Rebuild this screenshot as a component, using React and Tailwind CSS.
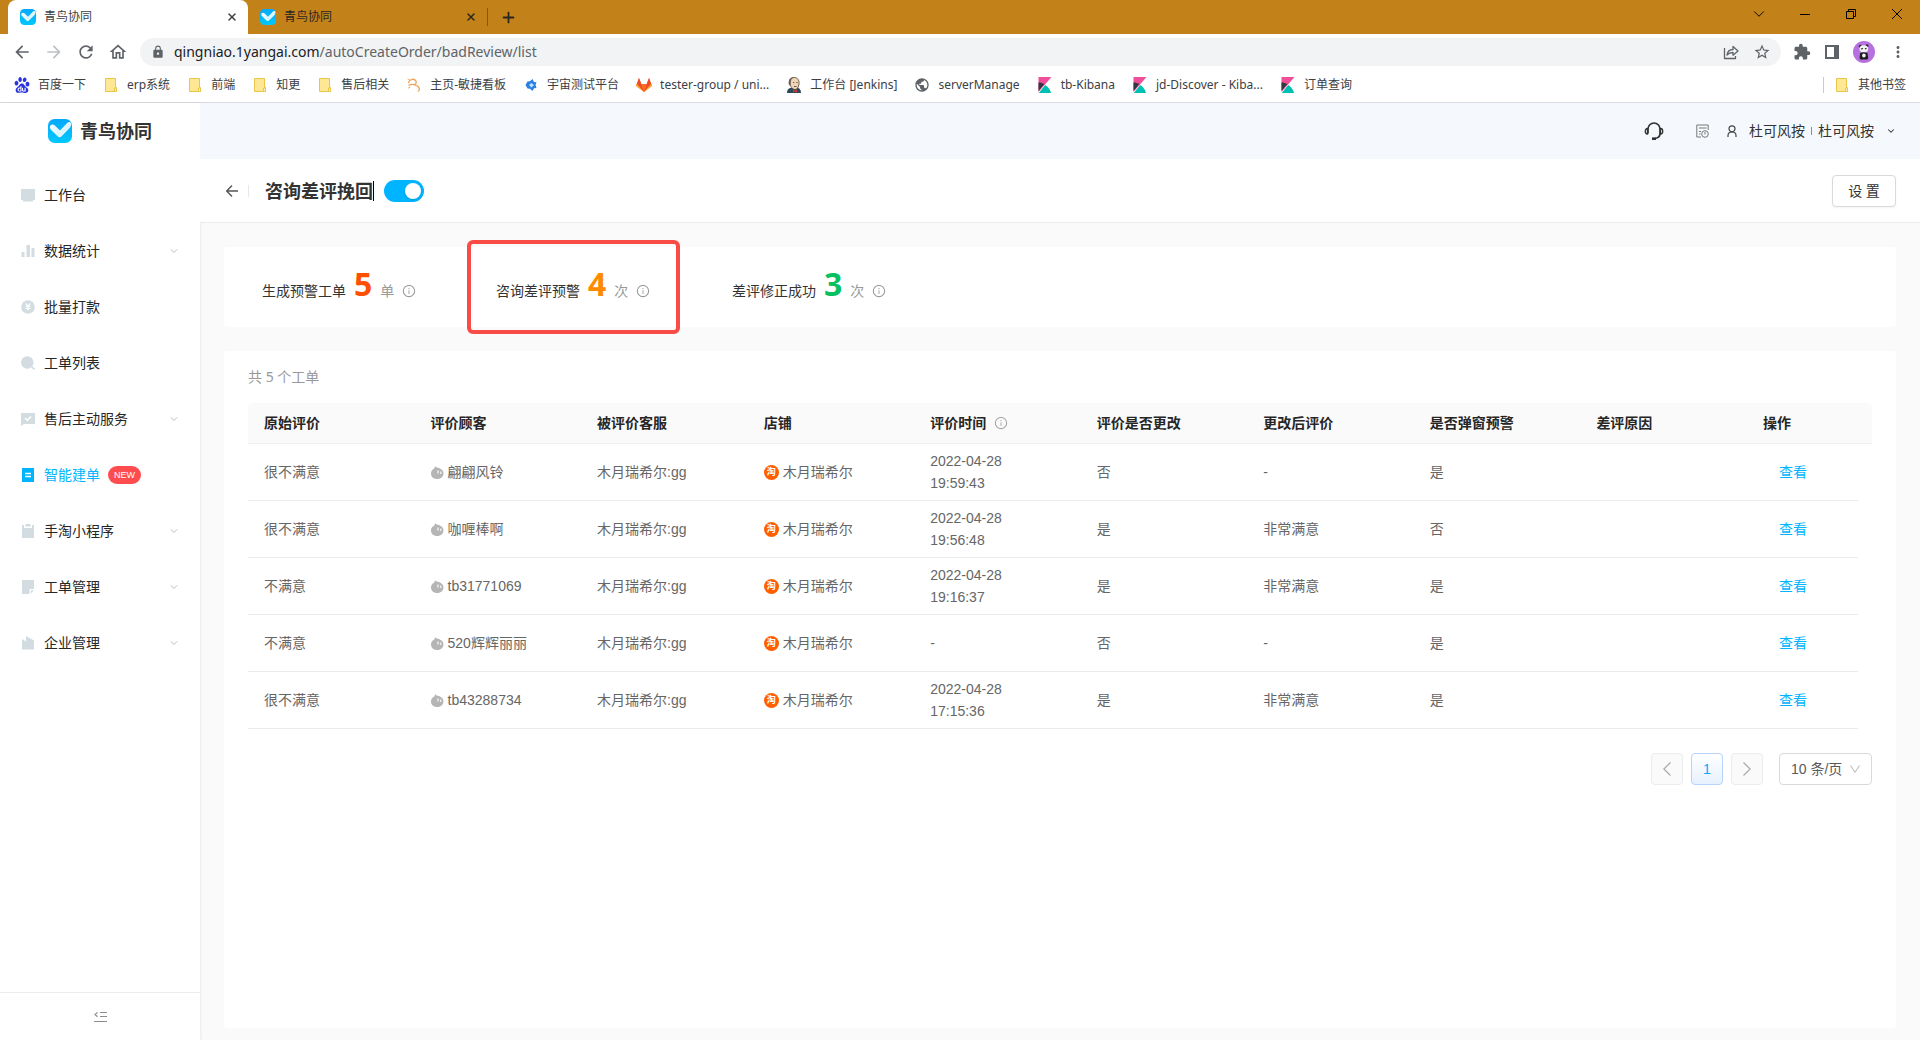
import React from "react";
import {
  MdArrowBack,
  MdArrowForward,
  MdRefresh,
  MdLock,
  MdStarBorder,
  MdExtension,
  MdMoreVert,
  MdPublic,
  MdOutlineHome,
} from "react-icons/md";
import { SiBaidu } from "react-icons/si";
import { AiOutlineInfoCircle } from "react-icons/ai";
import { ChevronDown, X, Plus } from "lucide-react";

function Bird({ className, id }) {
  return (
    <svg viewBox="0 0 24 24" className={className} aria-hidden="true">
      <defs>
        <linearGradient id={id + "a"} x1="0" y1="0" x2="0" y2="1">
          <stop offset="0" stopColor="#06a8fb" />
          <stop offset="1" stopColor="#00c8fd" />
        </linearGradient>
        <linearGradient id={id + "b"} x1="0" y1="0" x2="1" y2="1">
          <stop offset="0" stopColor="#fff" />
          <stop offset="0.6" stopColor="#d9f4ff" />
          <stop offset="1" stopColor="#fff" />
        </linearGradient>
      </defs>
      <rect width="24" height="24" rx="6.5" fill={"url(#" + id + "a)"} />
      <path
        d="M2 7.2 C3 5.2 5 5 6.6 6.3 L12 11.6 L19.6 3.6 C21.4 2.2 23.4 3.2 23.2 5.6 C23 8 21.5 9.2 20 10.8 L13.8 17 C12.4 18.6 11 18.6 9.6 17.2 L3.6 11.4 C2.2 10 1.6 8.6 2 7.2Z"
        fill={"url(#" + id + "b)"}
      />
    </svg>
  );
}

function Folder() {
  return (
    <svg viewBox="0 0 16 16" className="size-4" aria-hidden="true">
      <path d="M2.5 1.5h10v9h1v4h-11z" fill="#ffe794" stroke="#e8c64a" />
      <path d="M11.5 14.5v-3.5h2v3.5z" fill="#fff3c4" stroke="#e8c64a" />
    </svg>
  );
}

function Kibana() {
  return (
    <svg viewBox="0 0 16 16" className="size-4" aria-hidden="true">
      <path d="M1.5 0h13L1.5 15z" fill="#f04e98" />
      <path d="M1.5 5.5c2.2 0 4.2.6 5.8 1.6L1.5 14z" fill="#343741" />
      <path d="M8.2 8c3 1.8 5 4.600 5.800 8H1.800z" fill="#00bfb3" />
    </svg>
  );
}

function Gitlab() {
  return (
    <svg viewBox="0 0 16 16" className="size-4" aria-hidden="true">
      <path d="M0 8.500L3 1l2.300 6h5.400L13 1l3 7.500L8 15z" fill="#fc6d26" />
      <path d="M3 1l2.300 6L8 15 1 7zM13 1l-2.300 6L8 15l7-8z" fill="#ee4a2b" />
      <path d="M.8 6.800L0 9l8 6zM15.200 6.800L16 9l-8 6z" fill="#fca326" />
      <path d="M5.300 7h5.400L8 15z" fill="#fc6d26" />
    </svg>
  );
}

function Jenkins() {
  return (
    <svg viewBox="0 0 16 16" className="size-4" aria-hidden="true">
      <path d="M1 16c0-3 1-4 3-5l7-.5c2.500.5 4 2 4 5.500z" fill="#2f4858" />
      <path d="M3.500 6C3 2.500 5 .5 8.200.5S13.500 3 13 7c-.3 3-1.800 5.500-4 5.500S4 9.500 3.500 6z" fill="#f0d6b7" stroke="#4a3b33" strokeWidth=".8" />
      <path d="M2.800 7.500C2 2.500 4.500 0 8.500.2 6 1 5.300 2.300 5 4L4.500 9z" fill="#6b6058" />
      <path d="M7 5.500h1.300M10.300 5.500h1.300M8 9.500h2.500" stroke="#4a3b33" strokeWidth=".8" />
      <path d="M7 12.500l2 1 2-1v3l-2-1-2 1z" fill="#d33833" />
    </svg>
  );
}

function Agile() {
  return (
    <svg viewBox="0 0 16 16" className="size-4" fill="none" stroke="#f0a35c" strokeLinecap="round" aria-hidden="true">
      <path d="M2.500 5.500C3.500 2 8.500 1 10 4.200c.6 1.600-.2 3-1.800 3.600" strokeWidth="1.300" />
      <path d="M3 8.200c3-1.400 7.500-.8 9.500 1.800 1.200 1.600 1.200 3-.2 4" strokeWidth="1.300" />
      <path d="M2 2l1.500 1M2.500 11l1.500-.8" strokeWidth="1" />
    </svg>
  );
}

function Cosmos() {
  return (
    <svg viewBox="0 0 16 16" className="size-4" aria-hidden="true">
      <path d="M2.500 8l2-3.500 2.500-.2L9.500 2l1.500 3 2.500.2L12.500 8l1 3-2.500.2L9.500 14 7 11.700l-2.500-.2z" fill="#2b7fe0" />
      <path d="M6 8l2.500-2L11 8l-2.500 2.500z" fill="#bfe2fb" />
    </svg>
  );
}

const bookmarks = [
  { icon: <SiBaidu className="size-4 text-[#2932e1]" />, label: "百度一下" },
  { icon: <Folder />, label: "erp系统" },
  { icon: <Folder />, label: "前端" },
  { icon: <Folder />, label: "知更" },
  { icon: <Folder />, label: "售后相关" },
  { icon: <Agile />, label: "主页-敏捷看板" },
  { icon: <Cosmos />, label: "宇宙测试平台" },
  { icon: <Gitlab />, label: "tester-group / uni..." },
  { icon: <Jenkins />, label: "工作台 [Jenkins]" },
  { icon: <MdPublic className="size-4 text-[#5f6368]" />, label: "serverManage" },
  { icon: <Kibana />, label: "tb-Kibana" },
  { icon: <Kibana />, label: "jd-Discover - Kiba..." },
  { icon: <Kibana />, label: "订单查询" },
];

function Browser() {
  return (
    <header className="text-[#3c4043]">
      <div className="flex h-[34px] items-stretch bg-[#c28219] pl-2">
        <div className="flex w-60 items-center rounded-t-lg bg-white pr-2.5 pl-3">
          <Bird className="size-4" id="t1" />
          <span className="ml-2 flex-1 text-xs">青鸟协同</span>
          <button aria-label="关闭标签页" className="text-[#3c4043]">
            <X size={12} strokeWidth={3} />
          </button>
        </div>
        <div className="flex w-[239px] items-center pr-2.5 pl-3">
          <Bird className="size-4" id="t2" />
          <span className="ml-2 flex-1 text-xs text-[#2b2622]">青鸟协同</span>
          <button aria-label="关闭标签页" className="text-[#2b2622]">
            <X size={12} strokeWidth={3} />
          </button>
        </div>
        <span className="my-2 w-px bg-[#7a5a24]" />
        <button aria-label="新建标签页" className="ml-3 text-[#2b2622]">
          <Plus size={17} strokeWidth={2.5} />
        </button>
        <div className="ml-auto flex text-black">
          <button aria-label="搜索标签页" className="flex h-7 w-[46px] items-center justify-center">
            <ChevronDown size={18} strokeWidth={1.25} />
          </button>
          <button aria-label="最小化" className="flex h-7 w-[46px] items-center justify-center">
            <svg width="10" height="10" viewBox="0 0 10 10"><path d="M0 5.5h10" stroke="#000" /></svg>
          </button>
          <button aria-label="还原" className="flex h-7 w-[46px] items-center justify-center">
            <svg width="10" height="10" viewBox="0 0 10 10" fill="none" stroke="#000"><path d="M.5 2.5h7v7h-7zM2.5 2.5v-2h7v7h-2" /></svg>
          </button>
          <button aria-label="关闭" className="flex h-7 w-[46px] items-center justify-center">
            <svg width="10" height="10" viewBox="0 0 10 10" stroke="#000"><path d="M0 0l10 10M10 0L0 10" /></svg>
          </button>
        </div>
      </div>

      <div className="flex h-9 items-center bg-white pr-[13px] pl-3 text-[#5f6368]">
        <div className="flex items-center gap-3">
          <button aria-label="后退"><MdArrowBack size={20} /></button>
          <button aria-label="前进" className="text-[#bdc1c6]"><MdArrowForward size={20} /></button>
          <button aria-label="刷新"><MdRefresh size={20} /></button>
          <button aria-label="主页"><MdOutlineHome size={20} /></button>
        </div>
        <div className="ml-3 flex h-7 flex-1 items-center rounded-full bg-[#f1f3f4] pr-2.5 pl-[11px]">
          <MdLock size={14} />
          <a href="#" className="ml-[9px] text-sm text-[#5f6368]">
            <span className="text-[#202124]">qingniao.1yangai.com</span>/autoCreateOrder/badReview/list
          </a>
          <div className="ml-auto flex items-center gap-3.5">
            <button aria-label="分享">
              <svg width="16" height="16" viewBox="0 0 16 16" fill="none" stroke="#5f6368" strokeWidth="1.3" strokeLinejoin="round">
                <path d="M1.5 4v10.5h11V12" />
                <path d="M4 11c.5-3.500 2.500-5.500 6-5.500V2.500L15 7l-5 4.200V8.500c-2.800 0-4.500.8-6 2.500z" />
              </svg>
            </button>
            <button aria-label="收藏"><MdStarBorder size={18} /></button>
          </div>
        </div>
        <div className="ml-3 flex items-center gap-3.5">
          <button aria-label="扩展程序"><MdExtension size={18} /></button>
          <button aria-label="侧边栏">
            <svg width="14" height="14" viewBox="0 0 14 14"><path d="M0 0h14v14H0zM2 2v10h7V2z" fill="#5f6368" fillRule="evenodd" /></svg>
          </button>
          <button aria-label="个人资料">
            <svg width="22" height="22" viewBox="0 0 22 22">
              <circle cx="11" cy="11" r="11" fill="#b770e0" />
              <circle cx="7.300" cy="5.200" r="1.500" fill="#2a2a2a" />
              <circle cx="14" cy="4.800" r="1.500" fill="#2a2a2a" />
              <ellipse cx="10.800" cy="7.800" rx="4.400" ry="3.600" fill="#f3f3f3" />
              <path d="M8 8l2-.5M12 8l1.500-.8" stroke="#222" strokeWidth="1.200" />
              <path d="M7.200 12c2-1 5.200-1 7.200 0l.8 5-1 1.500H7.500L6.500 17z" fill="#1d1d1d" />
              <ellipse cx="10.900" cy="14.500" rx="1.800" ry="2" fill="#f3f3f3" />
            </svg>
          </button>
          <button aria-label="菜单"><MdMoreVert size={18} /></button>
        </div>
      </div>

      <nav aria-label="书签" className="flex h-[33px] items-center border-b border-[#d9dbde] bg-white pr-3.5 pb-0.5 pl-3.5 text-xs whitespace-nowrap">
        <div className="flex items-center gap-[17px]">
          {bookmarks.map((b, i) => (
            <a key={i} href="#" className="flex items-center gap-2">
              {b.icon}
              {b.label}
            </a>
          ))}
        </div>
        <a href="#" className="ml-auto flex items-center gap-2 border-l border-[#c8cacd] pl-2.5">
          <Folder />
          其他书签
        </a>
      </nav>
    </header>
  );
}

const g = "#d3dce1";
const icons = {
  desk: <path d="M0 1h14v11h-2v1.500H2V12H0z" fill={g} />,
  stats: <path d="M.5 8h3v5h-3zM5.500 1H9v12H5.500zM10.500 4h3v9h-3z" fill={g} />,
  money: (
    <>
      <circle cx="7" cy="7" r="6.800" fill={g} />
      <path d="M4.700 3.500L7 6.200l2.300-2.700M7 6v4.500M4.500 6.500h5M4.500 8.500h5" stroke="#fff" strokeWidth="1.200" fill="none" />
    </>
  ),
  search: (
    <>
      <circle cx="6.300" cy="6.500" r="6.200" fill={g} />
      <path d="M10.500 10.500l3 3" stroke={g} strokeWidth="1.600" />
    </>
  ),
  chat: (
    <>
      <path d="M0 1h14v11H3l-3 2z" fill={g} />
      <path d="M4 6l2.500 2.300L10 4.500" stroke="#fff" strokeWidth="1.500" fill="none" />
    </>
  ),
  doc: (
    <>
      <path d="M1 0h12v14H1z" fill="#00b4ff" />
      <path d="M4 5.500h6M4 8.500h6" stroke="#fff" strokeWidth="1.400" />
    </>
  ),
  clip: (
    <>
      <path d="M1 1h2v3h8V1h2v13H1z" fill={g} />
      <path d="M4.500 0h5v2.500h-5z" fill={g} />
    </>
  ),
  note: <path d="M1 0h12v9H8.500v5H1zM9.800 10.200H13l-3.200 3.600z" fill={g} />,
  firm: <path d="M1 3l4 2.500V0l8 4.500V13.500H1z" fill={g} />,
};

const menu = [
  { icon: "desk", label: "工作台" },
  { icon: "stats", label: "数据统计", sub: true },
  { icon: "money", label: "批量打款" },
  { icon: "search", label: "工单列表" },
  { icon: "chat", label: "售后主动服务", sub: true },
  { icon: "doc", label: "智能建单", active: true },
  { icon: "clip", label: "手淘小程序", sub: true },
  { icon: "note", label: "工单管理", sub: true },
  { icon: "firm", label: "企业管理", sub: true },
];

function Sidebar() {
  return (
    <aside className="flex w-50 shrink-0 flex-col bg-white text-[#262626] shadow-[1px_0_2px_rgba(0,0,0,0.06)]">
      <a href="#" className="flex h-14 items-center gap-2 pl-12 text-lg font-bold text-[#333]">
        <Bird className="size-6" id="lg" />
        青鸟协同
      </a>
      <nav className="mt-2 flex flex-col">
        {menu.map((m) => (
          <a key={m.label} href="#" className={m.active ? "flex h-14 items-center pr-5 pl-[21px] text-sm text-[#00b4ff]" : "flex h-14 items-center pr-5 pl-[21px] text-sm"}>
            <svg viewBox="0 0 14 14" className="mr-[9px] size-3.5" aria-hidden="true">
              {icons[m.icon]}
            </svg>
            {m.label}
            {m.active && (
              <span className="ml-2 rounded-full bg-[#ff4d4f] px-1.5 font-['Liberation_Sans'] text-[9px] leading-[18px] text-white">NEW</span>
            )}
            {m.sub && <ChevronDown size={12} className="ml-auto text-[#bfbfbf]" />}
          </a>
        ))}
      </nav>
      <button aria-label="收起菜单" className="mt-auto flex h-12 items-center justify-center border-t border-[#ececec]">
        <svg width="13" height="12" viewBox="0 0 13 12" fill="none" stroke="#8c8c8c" strokeWidth="1.200" aria-hidden="true">
          <path d="M6 1.500h7M6 5.500h7M0 10.500h13M3.500 1.500L1 3.500l2.500 2.200" />
        </svg>
      </button>
    </aside>
  );
}

const stats = [
  { label: "生成预警工单", value: 5, unit: "单", color: "text-[#ff5000]" },
  { label: "咨询差评预警", value: 4, unit: "次", color: "text-[#ff8a00]", marked: true },
  { label: "差评修正成功", value: 3, unit: "次", color: "text-[#07c160]" },
];

const columns = ["原始评价", "评价顾客", "被评价客服", "店铺", "评价时间", "评价是否更改", "更改后评价", "是否弹窗预警", "差评原因", "操作"];

const rows = [
  ["很不满意", "翩翩风铃", "2022-04-28 19:59:43", "否", "-", "是"],
  ["很不满意", "咖喱棒啊", "2022-04-28 19:56:48", "是", "非常满意", "否"],
  ["不满意", "tb31771069", "2022-04-28 19:16:37", "是", "非常满意", "是"],
  ["不满意", "520辉辉丽丽", "-", "否", "-", "是"],
  ["很不满意", "tb43288734", "2022-04-28 17:15:36", "是", "非常满意", "是"],
];

function Drop() {
  return (
    <svg viewBox="0 0 13 13" className="size-[13px] shrink-0" aria-hidden="true">
      <path d="M4 0c1 2 2.500 1.500 4.500 2.200 2.500 1 4 2.800 4 5C12.500 10.500 10 13 6.300 13S0 10.800 0 7.500C0 5.300 1 4 2.600 3 3.500 2.300 4 1.500 4 0z" fill="#b5b5b5" />
      <path d="M7 4.500v3M9.800 5.500v2.500" stroke="#fff" strokeWidth="1.100" />
    </svg>
  );
}

function Tao() {
  return (
    <span className="flex size-[15px] shrink-0 items-center justify-center rounded-full bg-[#ff5f00] text-[9px] leading-none font-bold text-white">淘</span>
  );
}

function Table() {
  return (
    <table className="mt-[15px] w-full table-fixed border-separate border-spacing-0 text-left text-sm leading-[22px] text-[#666]">
      <colgroup>
        {columns.slice(1).map((c) => (
          <col key={c} />
        ))}
        <col className="w-[111px]" />
        <col className="w-3.5" />
      </colgroup>
      <thead>
        <tr className="text-[#262626]">
          {columns.map((c, i) => (
            <th key={c} className="h-[41px] border-b border-[#f0f0f0] bg-[#fafafa] pl-4 font-bold whitespace-nowrap first:rounded-tl">
              {c}
              {i === 4 && <AiOutlineInfoCircle size={14} className="mb-0.5 ml-2 inline text-[#a6a6a6]" />}
            </th>
          ))}
          <td className="rounded-tr border-b border-[#f0f0f0] bg-[#fafafa]" />
        </tr>
      </thead>
      <tbody className="font-['Liberation_Sans','Noto_Sans_CJK_SC',sans-serif] [&_td]:h-[57px] [&_td]:border-b [&_td]:border-[#ebebeb] [&_td]:pl-4">
        {rows.map((r) => (
          <tr key={r[1]}>
            <td>{r[0]}</td>
            <td>
              <div className="flex items-center gap-1"><Drop />{r[1]}</div>
            </td>
            <td>木月瑞希尔:gg</td>
            <td>
              <div className="flex items-center gap-1"><Tao />木月瑞希尔</div>
            </td>
            <td className="pr-12">{r[2]}</td>
            <td>{r[3]}</td>
            <td>{r[4]}</td>
            <td>{r[5]}</td>
            <td />
            <td>
              <a href="#" className="ml-4 text-[#00b4ff]">查看</a>
            </td>
          </tr>
        ))}
      </tbody>
    </table>
  );
}

function Pagination() {
  return (
    <div className="mt-6 flex justify-end gap-2 text-sm text-[#595959]">
      <button aria-label="上一页" disabled className="flex size-8 items-center justify-center rounded border border-[#ececec] bg-[#fafafa]">
        <svg width="8" height="14" viewBox="0 0 8 14" fill="none" stroke="#a8a8a8" strokeWidth="1.200" aria-hidden="true"><path d="M7.500.5L.8 7l6.700 6.500" /></svg>
      </button>
      <button className="size-8 rounded border border-[#b5d3fb] bg-linear-to-b from-white to-[#e6f1fe] font-['Liberation_Sans'] text-[#00a8ff]">1</button>
      <button aria-label="下一页" disabled className="flex size-8 items-center justify-center rounded border border-[#ececec] bg-[#fafafa]">
        <svg width="8" height="14" viewBox="0 0 8 14" fill="none" stroke="#a8a8a8" strokeWidth="1.200" aria-hidden="true"><path d="M.5.5L7.200 7 .5 13.500" /></svg>
      </button>
      <div className="relative ml-2">
        <select aria-label="每页条数" className="h-8 w-[93px] appearance-none rounded border border-[#d9d9d9] bg-white pl-[11px] font-['Liberation_Sans','Noto_Sans_CJK_SC',sans-serif]">
          <option>10 条/页</option>
        </select>
        <svg width="10" height="8" viewBox="0 0 10 8" fill="none" stroke="#bfbfbf" strokeWidth="1.100" className="pointer-events-none absolute top-3 right-3" aria-hidden="true"><path d="M.5.5L5 7.200 9.500.5" /></svg>
      </div>
    </div>
  );
}

export default function App() {
  return (
    <div className="flex min-h-screen flex-col bg-[#fafafa] font-['Noto_Sans','Noto_Sans_CJK_SC',sans-serif]">
      <Browser />
      <div className="flex flex-1">
        <Sidebar />
        <main className="flex min-w-0 flex-1 flex-col">
          <div className="flex h-14 items-center justify-end bg-[#f5f9fd] pr-6 text-sm text-[#333]">
            <button aria-label="客服">
              <svg width="20" height="20" viewBox="0 0 20 20" fill="none" stroke="#333" strokeWidth="1.700" aria-hidden="true">
                <path d="M4 12.500V8a6 6 0 0 1 12 0v4.500c0 3-2 4.500-5 5" />
                <path d="M3.500 7.500C.5 7.500.5 13 3.500 13zM16.500 7.500c3 0 3 5.500 0 5.500z" strokeWidth="1.300" />
                <path d="M8 17.700h4" strokeWidth="2.600" />
              </svg>
            </button>
            <button aria-label="待办" className="ml-8">
              <svg width="13" height="14" viewBox="0 0 13 14" fill="none" stroke="#777" aria-hidden="true">
                <path d="M5 13H.8V1h11.400v5M3 4h7.500M3 7.500h2M3 10h1.500" />
                <circle cx="9" cy="10" r="3.300" />
                <path d="M9 8v2.500" />
              </svg>
            </button>
            <svg width="10" height="12" viewBox="0 0 10 12" fill="none" stroke="#444" strokeWidth="1.200" className="ml-[18px]" aria-hidden="true">
              <circle cx="5" cy="3.800" r="3" />
              <path d="M1 12V10.500C1 8.500 2.700 7 5 7s4 1.500 4 3.500V12" />
            </svg>
            <span className="ml-3">杜可风按</span>
            <span className="mx-1.5 h-2 w-px bg-[#8c8c8c]" />
            <button className="flex items-center gap-3">
              杜可风按
              <ChevronDown size={10} strokeWidth={2.5} />
            </button>
          </div>

          <div className="flex h-16 items-center border-b border-[#ebebeb] bg-white px-6">
            <button aria-label="返回" className="flex">
              <svg width="16" height="14" viewBox="0 0 16 14" fill="none" stroke="#555" strokeWidth="1.400" aria-hidden="true">
                <path d="M14 7H3M8 1.500L2.700 7 8 12.500" />
              </svg>
            </button>
            <span className="ml-2 h-3 w-px bg-[#e8e8e8]" />
            <h1 className="ml-4 border-r border-black text-lg leading-5 font-bold text-[#333]">咨询差评挽回</h1>
            <label className="ml-2.5 flex">
              <input type="checkbox" role="switch" defaultChecked aria-label="咨询差评挽回" className="sr-only" />
              <span className="flex h-[22px] w-10 justify-end rounded-full bg-[#00b4ff] p-[3px]">
                <span className="size-4 rounded-full bg-white shadow" />
              </span>
            </label>
            <button className="ml-auto h-8 w-16 rounded border border-[#d9d9d9] bg-white text-sm text-[#333] shadow-xs">设 置</button>
          </div>

          <div className="flex flex-1 flex-col gap-6 px-6 pt-6 pb-3">
            <section className="flex h-20 items-center rounded bg-white pl-3.5">
              {stats.map((s) => (
                <div
                  key={s.label}
                  className={
                    s.marked
                      ? "mr-7 -my-2 flex h-[94px] w-[213px] items-center rounded-md border-4 border-[#f84c46] pl-[25px]"
                      : "flex w-[229px] items-center pl-6"
                  }
                >
                  <div className="flex items-baseline text-sm leading-[22px] text-[#333]">
                    {s.label}
                    <span className={s.color + " mx-2 text-[32px] leading-[22px] font-bold"}>{s.value}</span>
                    <span className="flex items-center gap-2 text-[#999]">
                      {s.unit}
                      <AiOutlineInfoCircle size={14} />
                    </span>
                  </div>
                </div>
              ))}
            </section>

            <section className="flex-1 rounded bg-white px-6 pt-[15px]">
              <p className="text-sm leading-[22px] text-[#999]">共 5 个工单</p>
              <Table />
              <Pagination />
            </section>
          </div>
        </main>
      </div>
    </div>
  );
}
